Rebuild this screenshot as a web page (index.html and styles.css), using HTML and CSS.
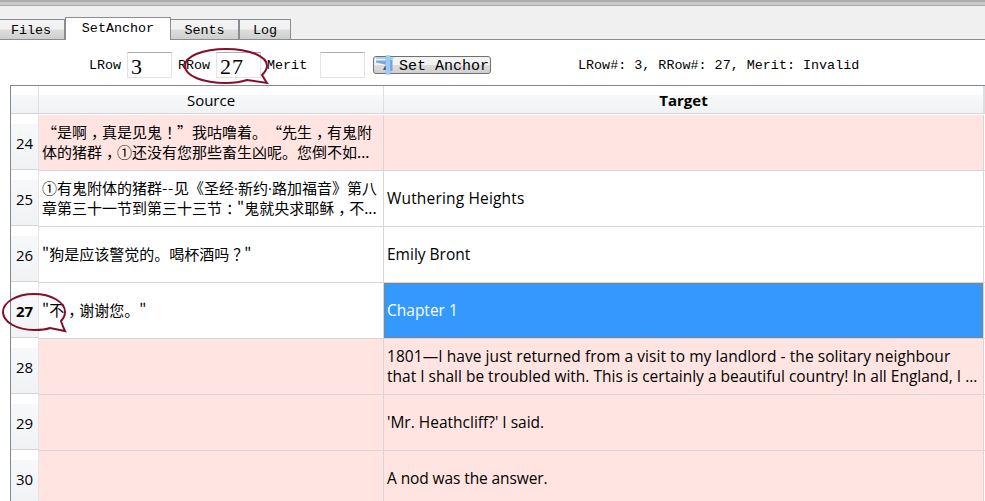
FILE: index.html
```
<!DOCTYPE html>
<html lang="zh-CN">
<head>
<meta charset="utf-8">
<title>SetAnchor</title>
<link rel="stylesheet" href="styles.css">
</head>
<body>
<div class="window">
  <div class="frame-edge"></div>
  <nav class="tabs">
    <div class="tab files">Files</div>
    <div class="tab active">SetAnchor</div>
    <div class="tab sents">Sents</div>
    <div class="tab log">Log</div>
  </nav>
  <main class="pane">
    <div class="toolbar">
      <label class="lrow">LRow</label><div class="field">3</div>
      <label class="rrow">RRow</label><div class="field">27</div>
      <label class="merit">Merit</label><div class="field"></div>
      <button class="set">
        <svg width="20" height="20" viewBox="0 0 20 20"><path d="M1 2h18l-2 4h-3V4H1z" fill="#a9d5f3"/><path d="M1 5.500h11V10L1 7.500z" fill="#78aae0"/><path d="M10 11l-2 4h3v-4z" fill="#3d5675"/><path d="M14.500 5h3v11h-3z" fill="#6fa5e4"/><path d="M11 .8h4v18.400h-4z" fill="#b7e0f5" stroke="#80b5de" stroke-width=".8"/><path d="M13 2v16" stroke="#7fb3e6"/></svg>
        <span>Set Anchor</span>
      </button>
      <div class="status">LRow#: 3, RRow#: 27, Merit: Invalid</div>
      <svg class="callout top" width="88" height="40" viewBox="0 0 88 40"><path d="M77 27C79 25 82 22 82 18C82 8 64 1 41 1C18 1 0 8 0 18C0 28 18 35 41 35C49 35 56 34 62 32L82 35Q80 32 77 27Z"/></svg>
    </div>
    <div class="grid">
      <div class="head corner"></div><div class="head">Source</div><div class="head bold">Target</div><div class="head"></div>
      <div class="num">24</div><div class="cell zh pink"><p>“是啊<i>，</i>真是见鬼<i>！</i>”我咕噜着。“先生<i>，</i>有鬼附</p><p>体的猪群<i>，</i>①还没有您那些畜生凶呢。您倒不如...</p></div><div class="cell pink"></div><div class="rest"></div>
      <div class="num">25</div><div class="cell zh"><p>①有鬼附体的猪群<span class="dash">--</span>见《圣经<span class="dot">·</span>新约<span class="dot">·</span>路加福音》第八</p><p>章第三十一节到第三十三节<i>：</i>"鬼就央求耶稣<i>，</i>不...</p></div><div class="cell"><p class="wh">Wuthering Heights</p></div><div class="rest"></div>
      <div class="num">26</div><div class="cell zh"><p>"狗是应该警觉的。喝杯酒吗<i>？</i>"</p></div><div class="cell"><p>Emily Bront</p></div><div class="rest"></div>
      <div class="num bold">27</div><div class="cell zh marked"><p>"不<i>，</i>谢谢您。"</p>
        <svg class="callout row" width="68" height="42" viewBox="0 0 68 42"><path d="M58 28C61 25 62 22 62 19C62 9 48 1 31 1C14 1 0 9 0 19C0 29 14 37 31 37C37 37 42 37 47 35L62 38Q60 34 58 28Z"/></svg>
      </div><div class="cell selected"><p>Chapter 1</p></div><div class="rest"></div>
      <div class="num">28</div><div class="cell pink"></div><div class="cell pink"><p class="l1">1801—I have just returned from a visit to my landlord - the solitary neighbour</p><p>that I shall be troubled with. This is certainly a beautiful country! In all England, I ...</p></div><div class="rest"></div>
      <div class="num">29</div><div class="cell pink"></div><div class="cell pink"><p>'Mr. Heathcliff?' I said.</p></div><div class="rest"></div>
      <div class="num">30</div><div class="cell pink"></div><div class="cell pink"><p class="nod">A nod was the answer.</p></div><div class="rest"></div>
    </div>
  </main>
</div>
</body>
</html>
```
FILE: styles.css
```
* { box-sizing: border-box; }
body { margin: 0; color: #000; background: #fff; }
p { margin: 0; white-space: pre; }
.window { width: 985px; height: 501px; overflow: hidden; background: #f0f0f0; }
.frame-edge { height: 6px; background: #c9c9c9; border-top: 2px solid #acacac; border-bottom: 1px solid #aaa; }
.tabs { display: flex; align-items: flex-end; height: 34px; box-shadow: inset 0 -1px #898c95; font: 13.4px/22px "Liberation Mono", monospace; }
.tab { height: 21px; padding-top: 0; border: 1px solid #898c95; border-left: 0; text-align: center; background: linear-gradient(#f2f2f2 0 48%, #ddd 52%, #cfcfcf); }
.files { width: 65px; padding-right: 2px; }
.active { width: 106px; height: 23px; background: #fff; border-left: 1px solid #898c95; border-bottom: 0; }
.sents { width: 68px; }
.log { width: 52px; border-left: 1px solid #898c95; }
.pane { background: #fff; height: 461px; }
.toolbar { position: relative; display: flex; align-items: center; height: 45px; padding: 5px 0 0 89px; font: 13.4px/20px "Liberation Mono", monospace; }
.toolbar label, .status { flex: none; padding-top: 2px; }
.lrow { width: 38px; }
.rrow { width: 38px; margin-left: 6px; }
.merit { width: 53px; margin-left: 6px; }
.field { width: 45px; height: 26px; flex: none; border: 1px solid #e2e3ea; border-top-color: #abadb3; border-radius: 1px; padding-left: 3px; font: 22px/27px "Liberation Serif", serif; letter-spacing: 1px; }
.set { display: flex; align-items: center; width: 118px; height: 18px; margin: 0 0 0 8px; padding: 0; border: 1px solid #707070; border-radius: 3px; background: linear-gradient(#f2f2f2 0 48%, #ddd 52%, #cfcfcf); font: 15px/18px "Liberation Mono", monospace; color: #000; white-space: pre; }
.set svg { margin-left: 1px; flex: none; }
.set span { margin-left: 4px; padding-top: 3px; }
.status { margin-left: 87px; white-space: pre; }
.callout { position: absolute; overflow: visible; fill: none; stroke: #850e2b; stroke-width: 2; z-index: 2; }
.top { left: 185px; top: 8px; }
.grid { display: grid; grid-template-columns: 28px 345px 600px 1fr; grid-template-rows: 29px repeat(7, 56px); margin-left: 10px; border: 1px solid #828790; border-width: 1px 0 0 1px; font: 15.500px/20px "Open Sans", sans-serif; }
.head { border-right: 1px solid #dedfe1; border-bottom: 1px solid #d5d5d5; text-align: center; line-height: 29px; font-size: 15px; background: linear-gradient(#fff 0 9px, #f7f8fa 9px, #f1f2f4); margin-bottom: 1px; }
.bold { font-weight: 700; }
.num { display: flex; align-items: center; justify-content: center; padding-top: 2px; font-size: 15px; border-right: 1px solid #e4e5e8; border-bottom: 1px solid #d5d5d5; margin: -1px 0 1px; background: linear-gradient(#fff 0 10px, #f7f8fa 10px, #f1f2f4); }
.cell { display: flex; flex-direction: column; justify-content: center; padding: 0 0 1px 3px; border-right: 1px solid #d4d6d8; border-bottom: 1px solid #d4d6d8; overflow: hidden; }
.rest { border-bottom: 1px solid #d8d8d8; }
.zh { font: 15px/20px "Noto Sans CJK SC", sans-serif; text-spacing-trim: space-all; }
.zh i { display: inline-block; width: 15px; font-style: normal; text-indent: 4px; line-height: 20px; }
.dash { letter-spacing: .8px; }
.dot { display: inline-block; width: 4px; font-family: "Open Sans", sans-serif; line-height: 20px; }
.l1 { letter-spacing: .06px; }
.wh { letter-spacing: .17px; }
.nod { letter-spacing: -.1px; }
.pink { background: #ffe4e1; }
.selected { color: #fff; background:
  repeating-linear-gradient(90deg, #c87020 0 1px, #3399ff 1px 2px) 0 0 / 100% 1px no-repeat,
  repeating-linear-gradient(90deg, #c87020 0 1px, #3399ff 1px 2px) 0 100% / 100% 1px no-repeat,
  repeating-linear-gradient(#c87020 0 1px, #3399ff 1px 2px) 1px 0 / 1px 100% no-repeat,
  repeating-linear-gradient(#c87020 0 1px, #3399ff 1px 2px) calc(100% - 1px) 0 / 1px 100% no-repeat,
  #3399ff; background-origin: padding-box; background-clip: padding-box; }
.marked { position: relative; overflow: visible; }
.row { left: -36px; top: 10px; }
```
